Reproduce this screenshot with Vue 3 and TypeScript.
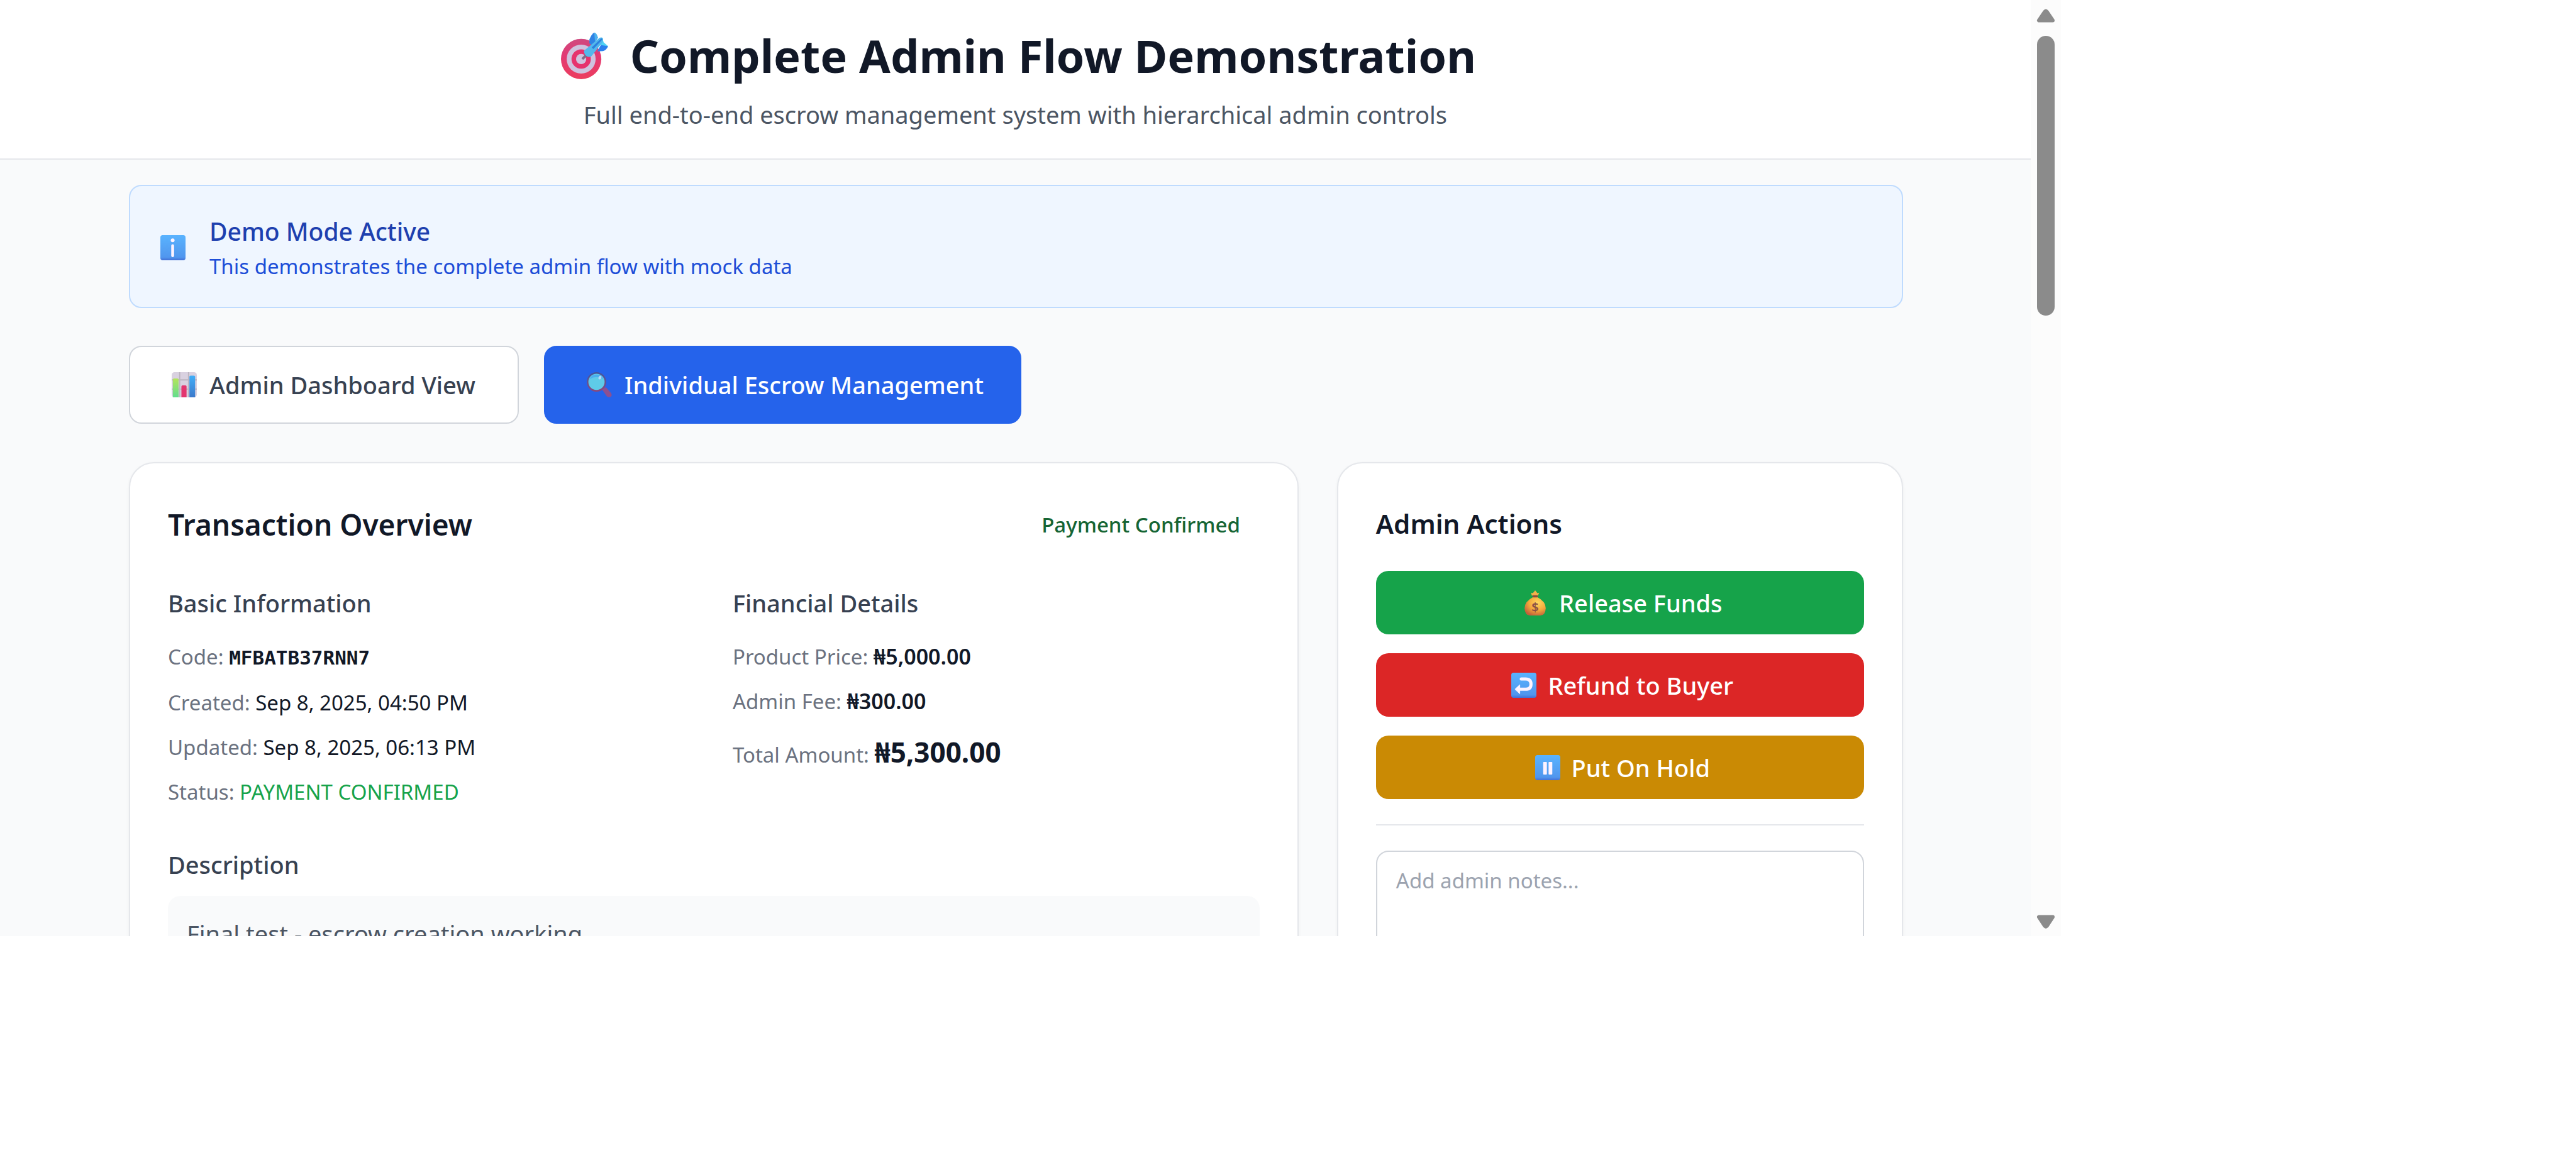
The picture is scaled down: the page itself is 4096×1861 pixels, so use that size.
<script setup lang="ts">
import { ref } from 'vue'

type View = 'dashboard' | 'escrow'
type IconName = 'coins' | 'refund' | 'pause'

interface Action {
  label: string
  icon: IconName
  tone: string
}

interface Detail {
  label: string
  value: string
  style: string
}

const view = ref<View>('escrow')
const notes = ref('')

const actions: Action[] = [
  { label: 'Release Funds', icon: 'coins', tone: 'green' },
  { label: 'Refund to Buyer', icon: 'refund', tone: 'red' },
  { label: 'Put On Hold', icon: 'pause', tone: 'amber' },
]

const basics: Detail[] = [
  { label: 'Code:', value: 'MFBATB37RNN7', style: 'code' },
  { label: 'Created:', value: 'Sep 8, 2025, 04:50 PM', style: 'plain' },
  { label: 'Updated:', value: 'Sep 8, 2025, 06:13 PM', style: 'plain' },
  { label: 'Status:', value: 'PAYMENT CONFIRMED', style: 'status' },
]

const money: Detail[] = [
  { label: 'Product Price:', value: '₦5,000.00', style: 'amount' },
  { label: 'Admin Fee:', value: '₦300.00', style: 'amount' },
  { label: 'Total Amount:', value: '₦5,300.00', style: 'total' },
]
</script>

<template>
  <div class="window">
    <svg class="defs" aria-hidden="true">
      <defs>
        <linearGradient id="tile" x1="0" y1="0" x2="0" y2="1">
          <stop offset="0" stop-color="#59b3ff" />
          <stop offset="0.5" stop-color="#55a3f5" />
          <stop offset="0.88" stop-color="#5096ee" />
          <stop offset="1" stop-color="#4470d6" />
        </linearGradient>
        <linearGradient id="ring" x1="0" y1="0" x2="0" y2="1">
          <stop offset="0" stop-color="#cf4a80" />
          <stop offset="0.4" stop-color="#e23a74" />
          <stop offset="1" stop-color="#ec3d5e" />
        </linearGradient>
        <radialGradient id="bag" cx="0.62" cy="0.3" r="0.75">
          <stop offset="0" stop-color="#ffd75e" />
          <stop offset="0.55" stop-color="#f3a83c" />
          <stop offset="1" stop-color="#c2603a" />
        </radialGradient>
        <linearGradient id="bar-green" x1="0" y1="0" x2="0" y2="1">
          <stop offset="0" stop-color="#b4e45c" />
          <stop offset="1" stop-color="#62dd8e" />
        </linearGradient>
        <linearGradient id="bar-blue" x1="0" y1="0" x2="0" y2="1">
          <stop offset="0" stop-color="#41aef8" />
          <stop offset="1" stop-color="#3c79cb" />
        </linearGradient>
        <linearGradient id="rim" x1="0" y1="0" x2="0" y2="1">
          <stop offset="0" stop-color="#45569c" />
          <stop offset="1" stop-color="#87497f" />
        </linearGradient>
      </defs>
    </svg>

    <div class="page">
      <header class="masthead">
        <h1>
          <svg class="target" viewBox="0 0 83 83" aria-hidden="true">
            <circle cx="35.5" cy="47.5" r="35.5" fill="url(#ring)" />
            <circle cx="35.5" cy="47.5" r="25.5" fill="#cfc2de" />
            <circle cx="35.5" cy="47.5" r="17" fill="#e6326e" />
            <circle cx="35.5" cy="47.5" r="9" fill="#cfc2de" />
            <path d="M36 46 L46 36 L48 41 L39 49 Z" fill="#7d6a86" />
            <path d="M50 13 Q54 3 58.500 .7 Q61 1 65 10 L56 24 L50 20 Z" fill="#2f83e4" />
            <path d="M58.500 .7 Q63 1 65 10 L60 17 Z" fill="#4db2ee" />
            <path d="M71 21 L83 25 Q80 32 74 33.500 L64 34 Z" fill="#2b80ee" />
            <path d="M73 10 L75 18 L83 25 L71 23 L65 22 Z" fill="#4fd3f5" />
            <path d="M40.500 33 L68 10 Q73 8 74 12 L73 18 L54 42 Q50 45 46 43 Q40 39 40.500 33 Z" fill="#52b8ec" />
            <path d="M54 27 L71 11 L73 13 L57 30 Z" fill="#2c7fdd" />
          </svg>
          <span>Complete Admin Flow Demonstration</span>
        </h1>
        <p>Full end-to-end escrow management system with hierarchical admin controls</p>
      </header>

      <main>
        <section class="notice">
          <svg class="icon" viewBox="0 0 44 44" aria-hidden="true">
            <rect width="44" height="44" rx="4" fill="url(#tile)" />
            <circle cx="21.500" cy="9" r="3.300" fill="#fdf3ff" />
            <rect x="19" y="16" width="5" height="22.500" rx="2.500" fill="#fdf3ff" />
          </svg>
          <div>
            <h2>Demo Mode Active</h2>
            <p>This demonstrates the complete admin flow with mock data</p>
          </div>
        </section>

        <nav class="tabs" aria-label="Views">
          <button type="button" :class="{ active: view === 'dashboard' }" @click="view = 'dashboard'">
            <svg class="icon" viewBox="0 0 44 44" aria-hidden="true">
              <rect width="44" height="44" rx="5" fill="#d9d1e0" />
              <path d="M14 0V44M29.500 0V44M0 13.500H44M0 29.500H44" stroke="#bcb5bf" stroke-width="2" />
              <path d="M2 44V13q0-2 2-2h6q2 0 2 2v31z" fill="url(#bar-green)" />
              <path d="M17 44V25q0-2 2-2h5q2 0 2 2v19z" fill="#e3356f" />
              <path d="M31 44V8q0-2 2-2h6q2 0 2 2v36z" fill="url(#bar-blue)" />
            </svg>
            <span>Admin Dashboard View</span>
          </button>
          <button type="button" :class="{ active: view === 'escrow' }" @click="view = 'escrow'">
            <svg class="icon" viewBox="0 0 44 44" aria-hidden="true">
              <path d="M26.500 30 Q31 26 34 27 L42 36 Q45 40 42 43 Q38 45 35 42 Z" fill="#8d5091" />
              <circle cx="17" cy="17" r="15.600" fill="#5fcbe8" stroke="url(#rim)" stroke-width="2.800" />
              <path d="M5 12 A13 13 0 0 1 29 12 Q17 5 5 12 Z" fill="#4aaef0" />
              <ellipse cx="23" cy="9.500" rx="2.400" ry="3.200" fill="#b9d8fa" transform="rotate(25 23 9.500)" />
            </svg>
            <span>Individual Escrow Management</span>
          </button>
        </nav>

        <div class="columns">
          <section class="card">
            <div class="card-head">
              <h2>Transaction Overview</h2>
              <span class="badge">Payment Confirmed</span>
            </div>

            <div class="facts">
              <div>
                <h3>Basic Information</h3>
                <ul>
                  <li v-for="row in basics" :key="row.label">
                    {{ row.label }} <span :class="row.style">{{ row.value }}</span>
                  </li>
                </ul>
              </div>
              <div>
                <h3>Financial Details</h3>
                <ul>
                  <li v-for="row in money" :key="row.label">
                    {{ row.label }} <span :class="row.style">{{ row.value }}</span>
                  </li>
                </ul>
              </div>
            </div>

            <h3>Description</h3>
            <p class="description">Final test - escrow creation working</p>
          </section>

          <aside class="card">
            <h2 class="side-title">Admin Actions</h2>
            <div class="actions">
              <button v-for="action in actions" :key="action.label" type="button" :class="action.tone">
                <svg class="icon" viewBox="0 0 44 44" aria-hidden="true">
                  <g v-if="action.icon === 'coins'">
                    <path d="M16 9 L15 4 L18 5 L22 0 L26 5 L29 4 L27 9 Z" fill="#f3b04a" />
                    <path d="M18 12 H26 Q40 19 40.500 31 Q40 44 31 44 H13 Q4 44 3.500 31 Q4 19 18 12 Z" fill="url(#bag)" />
                    <rect x="17.500" y="8.500" width="9" height="4" rx="1.500" fill="#8d4a3b" />
                    <text x="22" y="37" text-anchor="middle" font-size="22" font-weight="600" fill="#8b4f45">$</text>
                  </g>
                  <g v-else-if="action.icon === 'refund'">
                    <rect width="44" height="44" rx="4" fill="url(#tile)" />
                    <path d="M17.500 11 H25 Q34.500 11 34.500 20 Q34.500 29 25 29 H14" fill="none" stroke="#fdf3ff" stroke-width="5.500" stroke-linecap="round" />
                    <path d="M6.500 29 L15 21 V37 Z" fill="#fdf3ff" stroke="#fdf3ff" stroke-linejoin="round" />
                  </g>
                  <g v-else>
                    <rect width="44" height="44" rx="4" fill="url(#tile)" />
                    <rect x="14" y="12" width="6.500" height="22" rx="1" fill="#fdf3ff" />
                    <rect x="23.500" y="12" width="6.500" height="22" rx="1" fill="#fdf3ff" />
                  </g>
                </svg>
                <span>{{ action.label }}</span>
              </button>
            </div>
            <div class="notes">
              <textarea v-model="notes" aria-label="Admin notes" placeholder="Add admin notes..."></textarea>
            </div>
          </aside>
        </div>
      </main>
    </div>

    <div class="scrollbar" aria-hidden="true">
      <svg viewBox="0 0 30 22"><path d="M4 18.500 H26 L16.500 4.500 Q15 3 13.500 4.500 Z" /></svg>
      <div class="thumb"></div>
      <svg class="down" viewBox="0 0 30 22"><path d="M4 3.500 H26 L16.500 18 Q15 19.500 13.500 18 Z" /></svg>
    </div>
  </div>
</template>

<style>
body {
  margin: 0;
  background: #fff;
}
</style>

<style scoped>
.window {
  display: flex;
  width: 80vw;
  height: 80vh;
  overflow: hidden;
  color: #111827;
  font: 400 33px/51px "Noto Sans", "Open Sans", sans-serif;
}

.defs {
  position: absolute;
  width: 0;
  height: 0;
}

h1,
h2,
h3,
p,
ul {
  margin: 0;
  padding: 0;
}

button,
textarea {
  box-sizing: border-box;
  margin: 0;
  font: inherit;
}

.icon {
  flex: none;
  width: 40px;
  height: 40px;
}

.page {
  flex: 1;
  min-width: 0;
  overflow: hidden;
  background: #f9fafb;
}

.masthead {
  padding: 40px 0 42px;
  border-bottom: 2px solid #e5e7eb;
  background: #fff;
  text-align: center;
}

.masthead h1 {
  display: flex;
  align-items: center;
  justify-content: center;
  gap: 35px;
  padding-left: 10px;
  font-size: 72px;
  font-weight: 700;
  line-height: 96px;
}

.target {
  flex: none;
  width: 75px;
  height: 75px;
}

.masthead p {
  margin-top: 18px;
  color: #4b5563;
  font-size: 38px;
  line-height: 56px;
}

main {
  padding: 40px 203px 60px 205px;
}

.notice {
  display: flex;
  align-items: center;
  gap: 38px;
  padding: 42px 48px 39px;
  border: 2px solid #bfdbfe;
  border-radius: 20px;
  background: #eff6ff;
  color: #1d4ed8;
}

.notice h2 {
  color: #1e40af;
  font-size: 39px;
  font-weight: 500;
  line-height: 60px;
}

.tabs {
  display: flex;
  gap: 40px;
  margin: 60px 0 61px;
}

.tabs button {
  display: flex;
  align-items: center;
  gap: 20px;
  min-width: 620px;
  padding: 30px 58px 30px 66px;
  border: 2px solid #d1d5db;
  border-radius: 20px;
  background: #fff;
  color: #374151;
  font-size: 38px;
  font-weight: 500;
  line-height: 60px;
}

.tabs .active {
  border-color: #2563eb;
  background: #2563eb;
  color: #fff;
}

.columns {
  display: grid;
  grid-template-columns: minmax(0, 1860fr) minmax(0, 900fr);
  gap: 61px;
}

.card {
  padding: 61px 60px;
  border: 2px solid #e5e7eb;
  border-radius: 40px;
  background: #fff;
  box-shadow: 0 2px 5px rgba(0, 0, 0, 0.05);
}

.card-head {
  display: flex;
  align-items: center;
  justify-content: space-between;
  margin-bottom: 59px;
}

.card-head h2 {
  font-size: 46px;
  font-weight: 600;
  line-height: 72px;
}

.badge {
  padding: 0 31px;
  color: #166534;
  font-weight: 500;
}

.facts {
  display: grid;
  grid-template-columns: 1fr 1fr;
  gap: 60px;
  margin-bottom: 60px;
}

h3 {
  color: #374151;
  font-size: 38px;
  font-weight: 500;
  line-height: 60px;
}

ul {
  display: flex;
  flex-direction: column;
  gap: 20px;
  margin-top: 30px;
  list-style: none;
  color: #6b7280;
}

.plain,
.amount,
.total,
.code {
  color: #111827;
}

.code {
  font-family: "DejaVu Sans Mono", monospace;
  font-size: 31px;
  font-weight: 700;
}

.status {
  color: #16a34a;
}

.amount {
  font-size: 34px;
  font-weight: 600;
}

.total {
  font-size: 44px;
  font-weight: 700;
  line-height: 70px;
}

.description {
  margin-top: 20px;
  padding: 30px;
  border-radius: 20px;
  background: #f9fafb;
  color: #4b5563;
  font-size: 38px;
  line-height: 60px;
}

.side-title {
  font-size: 42px;
  font-weight: 600;
  line-height: 70px;
}

.actions {
  display: flex;
  flex-direction: column;
  gap: 30px;
  margin-top: 40px;
}

.actions button {
  display: flex;
  align-items: center;
  justify-content: center;
  gap: 18px;
  padding: 21px 0 20px 8px;
  border: 0;
  border-radius: 20px;
  color: #fff;
  font-size: 38px;
  font-weight: 500;
  line-height: 60px;
}

.green {
  background: #16a34a;
}

.red {
  background: #dc2626;
}

.amber {
  background: #ca8a04;
}

.notes {
  margin-top: 40px;
  padding-top: 40px;
  border-top: 2px solid #e5e7eb;
}

textarea {
  display: block;
  width: 100%;
  height: 240px;
  padding: 20px 30px;
  border: 2px solid #d1d5db;
  border-radius: 20px;
  background: #fff;
  color: #111827;
  resize: none;
}

textarea::placeholder {
  color: #9ca3af;
  opacity: 1;
}

.scrollbar {
  display: flex;
  flex: none;
  flex-direction: column;
  align-items: center;
  box-sizing: border-box;
  width: 48px;
  padding: 14px 0 12px;
  background: #fcfcfc;
}

.scrollbar svg {
  width: 30px;
  height: 22px;
  fill: #8b8b8b;
  stroke: #8b8b8b;
  stroke-width: 6px;
  stroke-linejoin: round;
}

.thumb {
  width: 28px;
  height: 445px;
  margin-top: 21px;
  border-radius: 14px;
  background: #8b8b8b;
}

.scrollbar .down {
  margin-top: auto;
}
</style>
